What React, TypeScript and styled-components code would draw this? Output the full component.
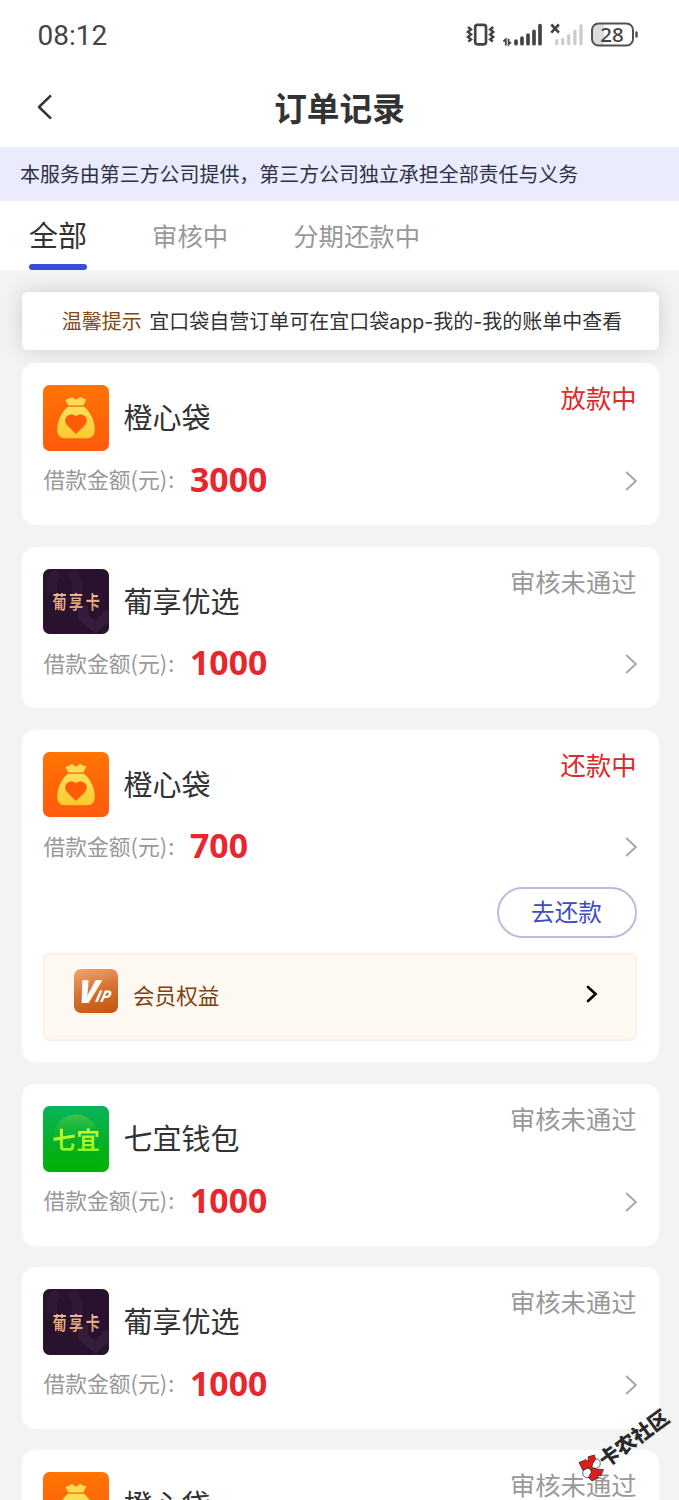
import React from 'react';
import styled, { createGlobalStyle, css } from 'styled-components';

const GlobalStyle = createGlobalStyle`
  * { box-sizing: border-box; }
  html, body { margin: 0; padding: 0; background: #f3f3f3; overflow: hidden; }
  body { font-family: "Noto Sans", "Noto Sans CJK SC", sans-serif; color: #333; }
`;

const Screen = styled.div`
  position: relative;
  width: 679px;
  height: 1500px;
  overflow: hidden;
  background: #f3f3f3;
  display: flex;
  flex-direction: column;
`;

const StatusBar = styled.div`
  flex: none;
  height: 71px;
  padding: 0 41px 0 37.6px;
  display: flex;
  align-items: center;
  justify-content: space-between;
  background: #fff;
`;

const Clock = styled.span`
  font-family: Roboto, sans-serif;
  font-size: 28px;
  line-height: 30px;
  color: #444;
`;

const NavBar = styled.header`
  flex: none;
  height: 76px;
  padding: 0 35px 4px;
  display: grid;
  grid-template-columns: 20px 1fr 20px;
  align-items: center;
  background: #fff;
`;

const Title = styled.h1`
  margin: 0;
  text-align: center;
  font-family: "Noto Sans CJK SC", sans-serif;
  font-size: 32.7px;
  line-height: 40px;
  font-weight: 700;
  color: #333;
`;

const Disclaimer = styled.div`
  flex: none;
  height: 54px;
  padding: 0 20px;
  font-family: "Noto Sans CJK SC", sans-serif;
  font-size: 19.95px;
  line-height: 53px;
  color: #2f3142;
  background: #eaecfd;
  white-space: nowrap;
`;

const Tabs = styled.nav`
  flex: none;
  height: 69px;
  padding-left: 29px;
  display: flex;
  align-items: stretch;
  background: #fff;
`;

const Tab = styled.div<{ $active?: boolean; $gap?: number }>`
  position: relative;
  margin-left: ${(p) => p.$gap ?? 0}px;
  font-family: "Noto Sans CJK SC", sans-serif;
  font-size: ${(p) => (p.$active ? 29 : 25.4)}px;
  line-height: ${(p) => (p.$active ? 66 : 68)}px;
  color: ${(p) => (p.$active ? '#333' : '#999')};
  white-space: nowrap;
  ${(p) =>
    p.$active &&
    css`
      &::after {
        content: '';
        position: absolute;
        left: 0;
        right: 0;
        bottom: 0;
        height: 6px;
        border-radius: 3px;
        background: #3a4cd8;
      }
    `}
`;

const Content = styled.main`
  padding: 22px 20.5px 0 21.8px;
  display: flex;
  flex-direction: column;
`;

const Tip = styled.div`
  flex: none;
  height: 58px;
  margin-bottom: 13.45px;
  padding-left: 40px;
  display: flex;
  gap: 7.5px;
  font-family: "Noto Sans CJK SC", sans-serif;
  font-size: 20px;
  line-height: 57px;
  border-radius: 6px;
  background: #fff;
  box-shadow: 0 0 22px rgba(0, 0, 0, 0.15);
  white-space: nowrap;
`;

const TipLabel = styled.span`
  color: #85480f;
`;

const TipText = styled.span`
  color: #333;
`;

const Latin = styled.span`
  font-family: Inter, sans-serif;
  font-size: 19.6px;
`;

const List = styled.div`
  position: relative;
  display: flex;
  flex-direction: column;
  gap: 21.7px;
`;

const Card = styled.section`
  flex: none;
  padding: 22px 22px 21px 21.6px;
  border-radius: 13px;
  background: #fff;
`;

const CardHead = styled.div`
  display: flex;
  align-items: flex-start;
  height: 65.5px;
`;

const Name = styled.div`
  flex: 1;
  margin-left: 14.5px;
  font-family: "Noto Sans CJK SC", sans-serif;
  font-size: 29px;
  line-height: 62px;
  color: #333;
`;

const Status = styled.div<{ $urgent: boolean }>`
  font-family: "Noto Sans CJK SC", sans-serif;
  font-size: 25.3px;
  line-height: 25px;
  color: ${(p) => (p.$urgent ? '#dd2a2a' : '#999')};
`;

const AmountRow = styled.div`
  display: flex;
  align-items: center;
  height: 46px;
  margin-top: 7px;
`;

const AmountLabel = styled.span`
  width: 146.6px;
  padding-bottom: 3px;
  font-family: "Noto Sans CJK SC", sans-serif;
  font-size: 21.8px;
  line-height: 42px;
  color: #999;
  white-space: nowrap;
`;

const Colon = styled.span`
  margin-left: 1px;
`;

const Amount = styled.span`
  flex: 1;
  padding-bottom: 4px;
  font-family: "Noto Sans", sans-serif;
  font-size: 33.8px;
  line-height: 42px;
  font-weight: 700;
  color: #e8262d;
`;

const Actions = styled.div`
  display: flex;
  justify-content: flex-end;
  margin-top: 17px;
`;

const RepayButton = styled.button`
  width: 140px;
  height: 51px;
  padding: 0 0 4px;
  border: 2px solid #b9bce2;
  border-radius: 26px;
  background: #fff;
  font-family: "Noto Sans CJK SC", sans-serif;
  font-size: 23.6px;
  line-height: 42px;
  color: #3b4cc4;
`;

const VipRow = styled.div`
  display: flex;
  align-items: center;
  height: 88.5px;
  margin-top: 14.5px;
  padding: 0 37px 7px 28.6px;
  border: 2px solid #fcefe6;
  border-radius: 6px;
  background: #fef8f3;
`;

const VipText = styled.span`
  flex: 1;
  margin-left: 15px;
  padding-top: 2px;
  font-family: "Noto Sans CJK SC", sans-serif;
  font-size: 21.6px;
  line-height: 32px;
  color: #7d430d;
`;

const VipBadge = styled.span`
  width: 44px;
  height: 44px;
  margin-top: -5px;
  padding-left: 5px;
  display: flex;
  align-items: center;
  border-radius: 7px;
  background: linear-gradient(165deg, #eda673 0%, #d7702e 50%, #c3540f 100%);
  font-family: "Open Sans", sans-serif;
  font-style: italic;
  font-weight: 800;
  color: #fff;
`;

const BadgeV = styled.span`
  font-size: 32px;
  line-height: 40px;
  transform: skewX(-6deg);
`;

const BadgeIp = styled.span`
  margin: 9px 0 0 -3px;
  font-size: 16px;
  line-height: 20px;
  font-weight: 700;
  transform: skewX(-12deg);
`;

const tileBackground = {
  bag: 'linear-gradient(#ff7404, #ff5a0c)',
  grape: '#28122e',
  qiyi: 'linear-gradient(#08b45c, #05b022 60%, #02b202)',
};

const Tile = styled.div<{ $kind: keyof typeof tileBackground }>`
  position: relative;
  flex: none;
  width: 65.5px;
  height: 65.5px;
  border-radius: 6.5px;
  overflow: hidden;
  display: flex;
  align-items: center;
  justify-content: center;
  background: ${(p) => tileBackground[p.$kind]};
`;

const TileArt = styled.svg`
  position: absolute;
  inset: 0;
  width: 100%;
  height: 100%;
  display: block;
`;

const GrapeText = styled.span`
  position: relative;
  font-family: "Noto Sans CJK SC", sans-serif;
  font-size: 14.2px;
  line-height: 20px;
  font-weight: 700;
  letter-spacing: 2.4px;
  margin-right: -2.4px;
  transform: scaleY(1.32);
  background: linear-gradient(#f0c09a, #dc9468);
  background-clip: text;
  color: transparent;
`;

const QiyiText = styled.span`
  position: relative;
  font-family: "Noto Sans CJK SC", sans-serif;
  font-size: 23.6px;
  line-height: 30px;
  font-weight: 700;
  letter-spacing: 0.8px;
  margin-right: -0.8px;
  background: linear-gradient(#dcf83a, #86f51c);
  background-clip: text;
  color: transparent;
`;

const Watermark = styled.div`
  position: absolute;
  left: 591.5px;
  top: 1424px;
  width: 83px;
  text-align: center;
  font-family: "Noto Sans CJK SC", sans-serif;
  font-size: 20.2px;
  line-height: 28px;
  font-weight: 900;
  color: #2a2a2a;
  white-space: nowrap;
  transform: rotate(-36deg);
`;

const WatermarkLogo = styled.svg`
  position: absolute;
  left: 576px;
  top: 1452px;
`;

type Kind = keyof typeof tileBackground;

const BagArt = () => (
  <TileArt viewBox="0 0 65.5 65.5">
    <defs>
      <linearGradient id="bagFill" x1="0" y1="0" x2="0" y2="1">
        <stop offset="0" stopColor="#ffe05a" />
        <stop offset="1" stopColor="#ffc92c" />
      </linearGradient>
    </defs>
    <path
      d="M25.6 20.6 L22.4 15.4 C23.6 14 25.6 14.2 27.2 13 C28.6 11.8 30 12 31 13.2 C32.2 14.8 34 14.8 35.2 13.4 C36.6 11.8 38.2 11.8 39 12.8 C40 14 41.6 13.4 43.2 14.4 C42.4 17 41 18.6 40.4 20.6 Z"
      fill="#ffdb55"
    />
    <path
      d="M24.6 22 H41.4 C46.6 26.3 51.8 35.4 51.8 44.6 C51.8 50.6 49 53.3 43.6 53.3 H22.4 C17 53.3 14.2 50.6 14.2 44.6 C14.2 35.4 19.4 26.3 24.6 22 Z"
      fill="url(#bagFill)"
    />
    <path d="M25 21.4 H41" stroke="#e88a1c" strokeWidth="1.2" />
    <path
      d="M33 49 L24.4 40.4 C21.6 37.4 21.6 33.6 24 31.3 C26.6 28.9 30.6 29 33 31.2 C35.4 29 39.4 28.9 42 31.3 C44.4 33.6 44.4 37.4 41.6 40.4 Z"
      fill="#ff5b08"
    />
  </TileArt>
);

const GrapeArt = () => (
  <TileArt viewBox="0 0 65.5 65.5" fill="none" stroke="#382040" strokeWidth="10">
    <path d="M9 24 V10 L16 4 M28 3 L34 12 V28" opacity="0.5" />
    <path d="M40 36 V48 L52 58 L64 48 V42" opacity="0.75" />
  </TileArt>
);

const QiyiArt = () => (
  <TileArt viewBox="0 0 65.5 65.5">
    <defs>
      <linearGradient id="domeFill" x1="0" y1="0" x2="0" y2="1">
        <stop offset="0" stopColor="#3fc44a" />
        <stop offset="0.7" stopColor="#05b022" stopOpacity="0" />
      </linearGradient>
    </defs>
    <circle cx="33" cy="31" r="22.5" fill="url(#domeFill)" />
  </TileArt>
);

const AppTile = ({ kind }: { kind: Kind }) => (
  <Tile $kind={kind}>
    {kind === 'bag' && <BagArt />}
    {kind === 'grape' && (
      <>
        <GrapeArt />
        <GrapeText>葡享卡</GrapeText>
      </>
    )}
    {kind === 'qiyi' && (
      <>
        <QiyiArt />
        <QiyiText>七宜</QiyiText>
      </>
    )}
  </Tile>
);

const StatusIcons = () => (
  <svg width="172" height="28" viewBox="466 21.5 172 28" fill="none">
    <g stroke="#444">
      <rect x="475.2" y="24.4" width="10.8" height="19.4" rx="2.2" strokeWidth="2.7" />
      <path
        d="M468 26.5l3 2.4-3 2.5 3 2.5-3 2.5 3 2.5-2.6 2.2M493.2 26.5l-3 2.4 3 2.5-3 2.5 3 2.5-3 2.5 2.6 2.2"
        strokeWidth="2.5"
      />
      <path d="M503.4 41l2.4-2.2V45M511 41.6l-2.4 2.4V38.2" strokeWidth="1.8" />
      <path
        d="M516 40.5V43.2M522 37.5V43.2M528 34.5V43.2M534 30.8V43.2M540 25V43.2"
        strokeWidth="3.7"
        strokeLinecap="round"
      />
      <path d="M551.3 24l7.6 8.2M558.9 24l-7.6 8.2" strokeWidth="2.6" />
    </g>
    <path
      d="M556.7 40.2V43.2M562.7 39V43.2M568.7 35V43.2M574.9 30.5V43.2M581 25V43.2"
      stroke="#ccc"
      strokeWidth="3.2"
      strokeLinecap="round"
    />
    <path d="M604 23.5H598a6 6 0 0 0-6 6V38.5a6 6 0 0 0 6 6H604Z" fill="#dcdcdc" />
    <rect x="592" y="23" width="41" height="22" rx="6.5" stroke="#505050" strokeWidth="2" />
    <path d="M636.5 32V36" stroke="#505050" strokeWidth="2.4" strokeLinecap="round" />
    <text
      x="612"
      y="41.5"
      textAnchor="middle"
      fontFamily="Noto Sans, sans-serif"
      fontSize="20.5"
      fontWeight="500"
      fill="#444"
    >
      28
    </text>
  </svg>
);

const BackIcon = () => (
  <svg width="20" height="28" viewBox="0 0 20 28" fill="none" stroke="#333" strokeWidth="2.5">
    <path d="M16 2.4 L4 14 L16 25.6" strokeLinejoin="round" />
  </svg>
);

const ArrowIcon = () => (
  <svg width="12" height="20" viewBox="0 0 12 20" fill="none" stroke="#a6a6a6" strokeWidth="1.9">
    <path d="M1.2 1 L10.8 10 L1.2 19" />
  </svg>
);

const BoldArrowIcon = () => (
  <svg width="12" height="18" viewBox="0 0 12 18" fill="none" stroke="#000" strokeWidth="2.6" strokeLinecap="round">
    <path d="M2 2 L9.6 9 L2 16" />
  </svg>
);

interface Order {
  kind: Kind;
  name: string;
  status: string;
  amount: string;
  urgent?: boolean;
  repay?: boolean;
}

const orders: Order[] = [
  { kind: 'bag', name: '橙心袋', status: '放款中', amount: '3000', urgent: true },
  { kind: 'grape', name: '葡享优选', status: '审核未通过', amount: '1000' },
  { kind: 'bag', name: '橙心袋', status: '还款中', amount: '700', urgent: true, repay: true },
  { kind: 'qiyi', name: '七宜钱包', status: '审核未通过', amount: '1000' },
  { kind: 'grape', name: '葡享优选', status: '审核未通过', amount: '1000' },
  { kind: 'bag', name: '橙心袋', status: '审核未通过', amount: '1000' },
];

const OrderCard = ({ order }: { order: Order }) => (
  <Card>
    <CardHead>
      <AppTile kind={order.kind} />
      <Name>{order.name}</Name>
      <Status $urgent={!!order.urgent}>{order.status}</Status>
    </CardHead>
    <AmountRow>
      <AmountLabel>
        借款金额(元)<Colon>:</Colon>
      </AmountLabel>
      <Amount>{order.amount}</Amount>
      <ArrowIcon />
    </AmountRow>
    {order.repay && (
      <>
        <Actions>
          <RepayButton>去还款</RepayButton>
        </Actions>
        <VipRow>
          <VipBadge>
            <BadgeV>V</BadgeV>
            <BadgeIp>IP</BadgeIp>
          </VipBadge>
          <VipText>会员权益</VipText>
          <BoldArrowIcon />
        </VipRow>
      </>
    )}
  </Card>
);

export default function App() {
  return (
    <Screen>
      <GlobalStyle />
      <StatusBar>
        <Clock>08:12</Clock>
        <StatusIcons />
      </StatusBar>
      <NavBar>
        <BackIcon />
        <Title>订单记录</Title>
      </NavBar>
      <Disclaimer>本服务由第三方公司提供，第三方公司独立承担全部责任与义务</Disclaimer>
      <Tabs>
        <Tab $active>全部</Tab>
        <Tab $gap={65}>审核中</Tab>
        <Tab $gap={65}>分期还款中</Tab>
      </Tabs>
      <Content>
        <Tip>
          <TipLabel>温馨提示</TipLabel>
          <TipText>
            宜口袋自营订单可在宜口袋<Latin>app-</Latin>我的<Latin>-</Latin>我的账单中查看
          </TipText>
        </Tip>
        <List>
          {orders.map((order, i) => (
            <OrderCard key={i} order={order} />
          ))}
        </List>
      </Content>
      <WatermarkLogo width="32" height="32" viewBox="576 1452 32 32">
        <g stroke="#222" strokeWidth="0.7" strokeLinejoin="round">
          <circle cx="595.5" cy="1463.5" r="4.8" fill="#fff" />
          <circle cx="587.5" cy="1473" r="4.8" fill="#fff" />
          <path
            d="M579 1462.5 L586 1459.5 L588.5 1462 L588 1456.8 L594.5 1455 L595.5 1459.5 L593 1463 L591.5 1467.5 L596 1469 L603.5 1469.5 L601 1475.5 L597.5 1475 L598.5 1478 L592 1481 L588.5 1477.5 L591.5 1472 L589 1467.5 L583 1470.5 Z"
            fill="#e01b1b"
          />
        </g>
      </WatermarkLogo>
      <Watermark>卡农社区</Watermark>
    </Screen>
  );
}
